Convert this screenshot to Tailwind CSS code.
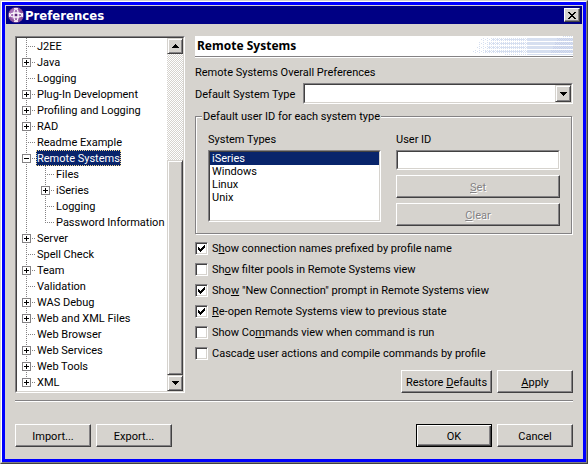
<!DOCTYPE html>
<html lang="en">
<head>
<meta charset="utf-8">
<title>Preferences</title>
<script src="https://cdn.jsdelivr.net/npm/@tailwindcss/browser@4"></script>
</head>
<body class="min-h-screen flex flex-col bg-[#d6d3ce] text-black text-[11px] leading-[18px] font-['Roboto','Noto_Sans',sans-serif] whitespace-nowrap">
<svg width="0" height="0" class="absolute" aria-hidden="true">
  <defs>
    <g id="trunk" stroke="#848284" stroke-dasharray="1 1"><path d="M9.5 0V16"/></g>
    <g id="leaf" stroke="#848284" stroke-dasharray="1 1" fill="none"><path d="M9.5 0V16M9 8.5H18"/></g>
    <g id="last" stroke="#848284" stroke-dasharray="1 1" fill="none"><path d="M9.5 0V9M9 8.5H18"/></g>
    <g id="box"><path d="M5.5 4.5h8v8h-8z" fill="#fff" stroke="#848284"/><path d="M7 8.5h5" stroke="#000"/></g>
    <g id="plus"><use href="#leaf"/><use href="#box"/><path d="M9.5 6v5" stroke="#000"/></g>
    <g id="minus"><use href="#leaf"/><use href="#box"/></g>
    <g id="lastplus"><use href="#last"/><use href="#box"/><path d="M9.5 6v5" stroke="#000"/></g>
    <pattern id="dither" width="4" height="2" patternUnits="userSpaceOnUse"><path d="M0 0h1v1h-1zM2 1h1v1h-1z" fill="#d6dff0"/></pattern>
    <pattern id="dense" width="2" height="2" patternUnits="userSpaceOnUse"><path d="M0 0h1v1h-1zM1 1h1v1h-1z" fill="#d6dff0"/></pattern>
    <pattern id="shade" width="2" height="2" patternUnits="userSpaceOnUse"><path d="M0 0h1v1h-1zM1 1h1v1h-1z" fill="#c8d1ea"/></pattern>
  </defs>
</svg>
<div class="flex-1 flex flex-col border border-t-[#d6d3ce] border-l-[#d6d3ce] border-r-[#424142] border-b-[#424142]">
<div class="flex-1 flex flex-col border border-t-white border-l-white border-r-[#848284] border-b-[#848284]">
<div class="flex-1 flex flex-col border-3 border-[#0000ff] p-px">
  <header class="h-[18px] flex items-center bg-[#000084] text-white pl-0.5 pr-0.5">
    <svg width="16" height="16" viewBox="0 0 16 16" aria-hidden="true"><circle cx="8" cy="8" r="7.8" fill="#8c529c"/><circle cx="7" cy="7" r="5.5" fill="#a873b8"/><g fill="none" stroke="#fff" stroke-width="1.2"><ellipse cx="8" cy="8" rx="6" ry="2.2"/><ellipse cx="8" cy="8" rx="2.2" ry="6"/></g><path d="M6 1.5h4M6 14.5h4M1.5 6v4M14.5 6v4" stroke="#f4e4f8"/><path d="M7 7h2v2h-2z" fill="#5a2878"/></svg>
    <h1 class="flex-1 h-4 pl-px text-[13px] font-bold font-['DejaVu_Sans_Condensed','DejaVu_Sans',sans-serif] [font-stretch:condensed]">Preferences</h1>
    <button aria-label="Close" class="w-4 h-3.5 flex items-center justify-center bg-[#d6d3ce] border border-t-white border-l-white border-r-[#424142] border-b-[#424142] shadow-[inset_-1px_-1px_0_#848284]">
      <svg width="8" height="7" shape-rendering="crispEdges"><path d="M0 0h2v1h1v1h2v-1h1v-1h2v1h-1v1h-1v1h-1v1h1v1h1v1h1v1h-2v-1h-1v-1h-2v1h-1v1h-2v-1h1v-1h1v-1h1v-1h-1v-1h-1v-1h-1z"/></svg>
    </button>
  </header>
  <main class="flex-1 grid grid-cols-[170px_1fr] gap-x-2.5 px-[9px] pt-3">
    <div class="flex border border-t-[#848284] border-l-[#848284] border-r-white border-b-white bg-[#d6d3ce]">
      <div class="flex-1 flex border border-t-[#424142] border-l-[#424142] border-r-[#d6d3ce] border-b-[#d6d3ce] bg-white min-w-0">
        <ul id="tree" role="tree" aria-label="Preference pages" class="flex-1 min-w-0"></ul>
        <div class="w-4 flex flex-col bg-[conic-gradient(#fff_25%,#d6d3ce_0_50%,#fff_0_75%,#d6d3ce_0)] bg-[length:2px_2px]">
          <button aria-label="Scroll up" class="h-4 grid place-items-center bg-[#d6d3ce] border border-t-[#d6d3ce] border-l-[#d6d3ce] border-r-[#424142] border-b-[#424142] shadow-[inset_1px_1px_0_#fff,inset_-1px_-1px_0_#848284]"><svg width="7" height="4" shape-rendering="crispEdges"><path d="M3 0h1v1h1v1h1v1h1v1h-7v-1h1v-1h1v-1h1z"/></svg></button>
          <div class="flex-[107]"></div>
          <div class="flex-[214] bg-[#d6d3ce] border border-t-[#d6d3ce] border-l-[#d6d3ce] border-r-[#424142] border-b-[#424142] shadow-[inset_1px_1px_0_#fff,inset_-1px_-1px_0_#848284]"></div>
          <button aria-label="Scroll down" class="h-4 grid place-items-center bg-[#d6d3ce] border border-t-[#d6d3ce] border-l-[#d6d3ce] border-r-[#424142] border-b-[#424142] shadow-[inset_1px_1px_0_#fff,inset_-1px_-1px_0_#848284]"><svg width="7" height="4" shape-rendering="crispEdges"><path d="M0 0h7v1h-1v1h-1v1h-1v1h-1v-1h-1v-1h-1v-1h-1z"/></svg></button>
        </div>
      </div>
    </div>
    <form class="flex flex-col min-w-0" onsubmit="return false">
      <div class="h-[22px] flex justify-between items-start bg-white border-b border-b-white shadow-[inset_0_-1px_0_#848284]">
        <h2 class="pl-0.5 pt-0.5 text-[12px] leading-4 font-bold font-['Noto_Sans',sans-serif]">Remote Systems</h2>
        <svg width="102" height="20" shape-rendering="crispEdges" aria-hidden="true">
          <g fill="url(#dither)"><path d="M10 2h30v3h-30zM8 6h32v3h-32zM5 10h35v3h-35zM2 14h38v3h-38z"/></g>
          <g fill="url(#dense)"><path d="M20 2h37v3h-37zM18 6h39v3h-39zM17 10h40v3h-40zM14 14h43v3h-43zM34 18h24v1h-24zM92 0h10v1h-10z"/></g>
          <g fill="#d6dff0"><path d="M34 3h20v1h-20zM30 7h24v1h-24zM30 11h24v1h-24zM28 15h24v1h-24zM56 2h46v3h-46zM56 6h46v3h-46zM56 10h46v3h-46zM56 14h46v3h-46zM56 18h46v1h-46z"/></g>
          <g fill="url(#shade)"><path d="M86 2h16v3h-16zM84 6h18v3h-18zM82 10h20v3h-20zM80 14h22v3h-22z"/></g>
        </svg>
      </div>
      <p class="mt-1.5 h-4">Remote Systems Overall Preferences</p>
      <div class="mt-[3px] flex items-center gap-2">
        <label for="systype" class="w-[100px] h-4">Default System Type</label>
        <div class="relative flex-1 h-[21px] border border-t-[#848284] border-l-[#848284] border-r-white border-b-white bg-white">
          <select id="systype" class="block w-full h-full appearance-none bg-white px-1 border border-t-[#424142] border-l-[#424142] border-r-[#d6d3ce] border-b-[#d6d3ce]"><option></option><option>iSeries</option></select>
          <span class="absolute right-px top-px bottom-px w-4 grid place-items-center pointer-events-none bg-[#d6d3ce] border border-t-[#d6d3ce] border-l-[#d6d3ce] border-r-[#424142] border-b-[#424142] shadow-[inset_1px_1px_0_#fff,inset_-1px_-1px_0_#848284]"><svg width="7" height="4" shape-rendering="crispEdges"><path d="M0 0h7v1h-1v1h-1v1h-1v1h-1v-1h-1v-1h-1v-1h-1z"/></svg></span>
        </div>
      </div>
      <fieldset class="mt-1 mr-px min-w-0 border border-[#848284] shadow-[1px_1px_0_#fff,inset_1px_1px_0_#fff]">
        <legend class="ml-1.5 px-px h-4 bg-[#d6d3ce]">Default user ID for each system type</legend>
        <div class="grid grid-cols-[173fr_164fr] gap-x-[15px] pl-3 pr-[11px] pt-[7px] pb-[7px]">
          <div>
            <label for="types" class="block h-4 mb-[3px]">System Types</label>
            <div class="h-[72px] border border-t-[#848284] border-l-[#848284] border-r-white border-b-white">
              <select id="types" size="5" class="block w-full h-full overflow-hidden bg-white p-0 border border-t-[#424142] border-l-[#424142] border-r-[#d6d3ce] border-b-[#d6d3ce]">
                <option selected class="h-[13px] min-h-0 leading-[15px] px-0.5 py-0 checked:bg-[linear-gradient(#08246b,#08246b)] [-webkit-text-fill-color:#fff]">iSeries</option>
                <option class="h-[13px] min-h-0 leading-[15px] px-0.5 py-0">Windows</option>
                <option class="h-[13px] min-h-0 leading-[15px] px-0.5 py-0">Linux</option>
                <option class="h-[13px] min-h-0 leading-[15px] px-0.5 py-0">Unix</option>
              </select>
            </div>
          </div>
          <div class="flex flex-col">
            <label for="uid" class="h-4 mb-[3px]">User ID</label>
            <div class="h-5 border border-t-[#848284] border-l-[#848284] border-r-white border-b-white">
              <input id="uid" type="text" class="block w-full h-full bg-white px-1 outline-none border border-t-[#424142] border-l-[#424142] border-r-[#d6d3ce] border-b-[#d6d3ce]">
            </div>
            <button disabled class="mt-[5px] h-[23px] pt-0.5 text-[#848284] [text-shadow:1px_1px_0_#fff] border border-t-white border-l-white border-r-[#424142] border-b-[#424142] shadow-[inset_-1px_-1px_0_#848284]"><u>S</u>et</button>
            <button disabled class="mt-[5px] h-[23px] pt-0.5 text-[#848284] [text-shadow:1px_1px_0_#fff] border border-t-white border-l-white border-r-[#424142] border-b-[#424142] shadow-[inset_-1px_-1px_0_#848284]"><u>C</u>lear</button>
          </div>
        </div>
      </fieldset>
      <div id="checks" class="mt-1.5 flex flex-col gap-[5px]"></div>
      <div class="mt-[9px] flex justify-end gap-[5px]">
        <button class="w-[91px] h-[23px] pt-0.5 border border-t-white border-l-white border-r-[#424142] border-b-[#424142] shadow-[inset_-1px_-1px_0_#848284]">Restore <u>D</u>efaults</button>
        <button class="w-[76px] h-[23px] pt-0.5 border border-t-white border-l-white border-r-[#424142] border-b-[#424142] shadow-[inset_-1px_-1px_0_#848284]"><u>A</u>pply</button>
      </div>
    </form>
  </main>
  <hr class="mt-[7px] mx-[9px] h-0.5 border-0 border-t border-t-[#848284] bg-white">
  <footer class="mt-[22px] mb-[11px] mx-[9px] flex gap-[5px]">
    <button class="w-[76px] h-[23px] pt-0.5 border border-t-white border-l-white border-r-[#424142] border-b-[#424142] shadow-[inset_-1px_-1px_0_#848284]">Import...</button>
    <button class="w-[76px] h-[23px] pt-0.5 border border-t-white border-l-white border-r-[#424142] border-b-[#424142] shadow-[inset_-1px_-1px_0_#848284]">Export...</button>
    <button class="ml-auto w-[76px] h-[23px] pt-0.5 border border-black shadow-[inset_1px_1px_0_#fff,inset_-1px_-1px_0_#424142,inset_-2px_-2px_0_#848284]">OK</button>
    <button class="w-[76px] h-[23px] pt-0.5 border border-t-white border-l-white border-r-[#424142] border-b-[#424142] shadow-[inset_-1px_-1px_0_#848284]">Cancel</button>
  </footer>
</div></div></div>
<script>
const cell = id => `<svg width="19" height="16" class="shrink-0" shape-rendering="crispEdges" aria-hidden="true"><use href="#${id}"/></svg>`;
const rows = [
  [0,'leaf','J2EE'],[0,'plus','Java'],[0,'leaf','Logging'],[0,'plus','Plug-In Development'],
  [0,'plus','Profiling and Logging'],[0,'plus','RAD'],[0,'leaf','Readme Example'],[0,'minus','Remote Systems',true],
  [1,'leaf','Files'],[1,'plus','iSeries'],[1,'leaf','Logging'],[1,'last','Password Information'],
  [0,'plus','Server'],[0,'leaf','Spell Check'],[0,'plus','Team'],[0,'leaf','Validation'],[0,'plus','WAS Debug'],
  [0,'plus','Web and XML Files'],[0,'leaf','Web Browser'],[0,'plus','Web Services'],[0,'plus','Web Tools'],[0,'lastplus','XML']];
document.getElementById('tree').innerHTML = rows.map(([d,k,t,s]) =>
  `<li role="treeitem" aria-level="${d+1}" class="flex h-4">${d ? cell('trunk') : ''}${cell(k)}<span class="${s ? 'px-px bg-[#08246b] text-white outline-1 -outline-offset-1 outline-dotted outline-[#f7db94]' : 'px-px'}">${t}</span></li>`).join('');
const checks = [
  ['S<u>h</u>ow connection names prefixed by profile name',1],['Sh<u>o</u>w filter pools in Remote Systems view',0],
  ['Sho<u>w</u> "New Connection" prompt in Remote Systems view',1],['<u>R</u>e-open Remote Systems view to previous state',1],
  ['Show Co<u>m</u>mands view when command is run',0],['Cascad<u>e</u> user actions and compile commands by profile',0]];
document.getElementById('checks').innerHTML = checks.map(([t,c]) =>
  `<label class="flex items-center gap-1"><span class="grid"><input type="checkbox" ${c ? 'checked' : ''} class="peer col-start-1 row-start-1 appearance-none size-[13px] bg-white border border-t-[#848284] border-l-[#848284] border-r-white border-b-white shadow-[inset_1px_1px_0_#424142,inset_-1px_-1px_0_#d6d3ce]"><svg width="13" height="13" shape-rendering="crispEdges" class="col-start-1 row-start-1 invisible peer-checked:visible pointer-events-none"><path d="M3 5v3h1v1h1v1h1v-1h1v-1h1v-1h1v-1h1v-3h-1v1h-1v1h-1v1h-1v1h-1v-1h-1v-1z"/></svg></span><span class="h-4">${t}</span></label>`).join('');
</script>
</body>
</html>
